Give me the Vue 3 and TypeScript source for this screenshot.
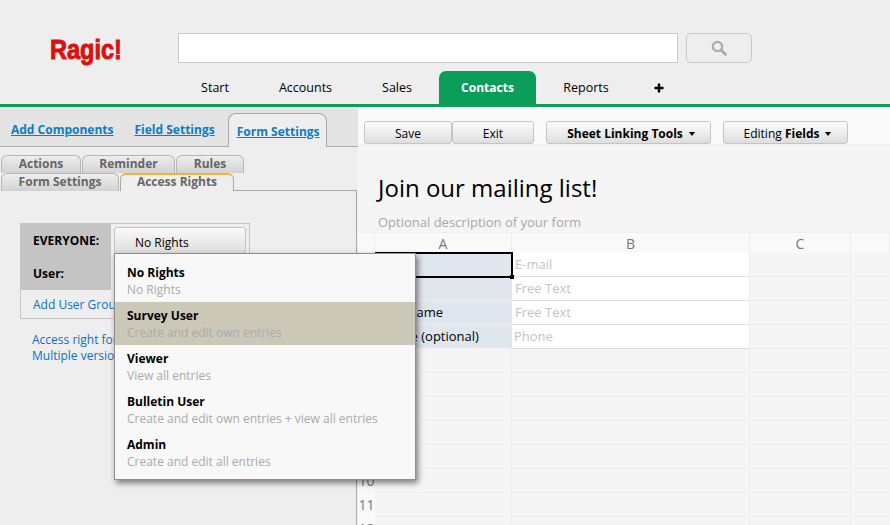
<script setup lang="ts">
const navItems = [
  { label: 'Start', width: 90 },
  { label: 'Accounts', width: 91 },
  { label: 'Sales', width: 92 },
  { label: 'Contacts', width: 97, active: true },
  { label: 'Reports', width: 100 },
]
const rowLabels = ['E-mail', 'Name', 'First name', 'Phone (optional)']
const fieldTypes = ['E-mail', 'Free Text', 'Free Text', 'Phone']
const rows = Array.from({ length: 12 }, (_, i) => i + 1)
const menu = [
  { name: 'No Rights', desc: 'No Rights' },
  { name: 'Survey User', desc: 'Create and edit own entries', active: true },
  { name: 'Viewer', desc: 'View all entries' },
  { name: 'Bulletin User', desc: 'Create and edit own entries + view all entries' },
  { name: 'Admin', desc: 'Create and edit all entries' },
]
</script>

<template>
  <div class="page">
    <header class="header">
      <div class="top">
        <div class="logo"><span class="logo-text">Ragic!</span></div>
        <div class="search"></div>
        <button class="search-btn" aria-label="Search">
          <svg width="16" height="16" viewBox="0 0 16 16">
            <circle cx="6.5" cy="6.5" r="4.7" fill="none" stroke="#aaa" stroke-width="2.2" />
            <path d="M10 10l4.6 4.4" stroke="#aaa" stroke-width="2.8" stroke-linecap="round" />
          </svg>
        </button>
      </div>
      <nav class="nav">
        <div
          v-for="n in navItems"
          :key="n.label"
          class="nav-item"
          :class="{ active: n.active }"
          :style="{ width: n.width + 'px' }"
        >{{ n.label }}</div>
        <div class="nav-plus">
          <svg width="10" height="10" viewBox="0 0 10 10"><path d="M5 .5v9M.5 5h9" stroke="#000" stroke-width="2.4" /></svg>
        </div>
      </nav>
    </header>

    <div class="main">
      <aside class="side">
        <div class="side-tabs">
          <a class="side-tab t1">Add Components</a>
          <a class="side-tab t2">Field Settings</a>
          <a class="side-tab current">Form Settings</a>
        </div>
        <div class="sub-tabs">
          <div class="sub-row">
            <div class="sub w-actions">Actions</div>
            <div class="sub w-reminder">Reminder</div>
            <div class="sub w-rules">Rules</div>
          </div>
          <div class="sub-row">
            <div class="sub w-form">Form Settings</div>
            <div class="sub w-access on">Access Rights</div>
            <div class="sub-fill"></div>
          </div>
        </div>
        <div class="rights">
          <div class="rights-table">
            <div class="rights-top">
              <div class="rights-labels">
                <div class="everyone">EVERYONE:</div>
                <div class="user">User:</div>
              </div>
              <div class="rights-ctrl">
                <div class="rights-btn">No Rights</div>
              </div>
            </div>
            <div class="add-group">Add User Group</div>
          </div>
          <p class="note">Access right for this sheet<br />Multiple versions available</p>
          <div class="popup">
            <div v-for="m in menu" :key="m.name" class="popup-item" :class="{ active: m.active }">
              <div class="popup-name">{{ m.name }}</div>
              <div class="popup-desc">{{ m.desc }}</div>
            </div>
          </div>
        </div>
      </aside>

      <section class="work">
        <div class="toolbar">
          <button class="tbtn save">Save</button>
          <button class="tbtn exit">Exit</button>
          <button class="tbtn link"><b>Sheet Linking Tools</b><i class="caret"></i></button>
          <button class="tbtn edit">Editing <b>Fields</b><i class="caret"></i></button>
        </div>
        <h1 class="title">Join our mailing list!</h1>
        <div class="desc">Optional description of your form</div>
        <div class="sheet">
          <div class="ch corner"></div>
          <div class="ch">A</div>
          <div class="ch">B</div>
          <div class="ch">C</div>
          <div class="ch"></div>
          <template v-for="r in rows" :key="r">
            <div class="rn">{{ r }}</div>
            <div class="cell" :class="{ label: r <= 4 }">{{ rowLabels[r - 1] }}</div>
            <div class="cell" :class="{ field: r <= 4, phone: r === 4 }">{{ fieldTypes[r - 1] }}</div>
            <div class="cell"></div>
            <div class="cell"></div>
          </template>
          <div class="selection"><span class="handle"></span></div>
        </div>
      </section>
    </div>
  </div>
</template>

<style>
html, body { margin: 0; padding: 0; background: #f5f5f5; }
</style>

<style scoped>
.page {
  width: 890px;
  height: 525px;
  overflow: hidden;
  position: relative;
  font-family: "Open Sans", sans-serif;
  font-size: 13px;
  color: #000;
  background: #f5f5f5;
}
.header {
  height: 104px;
  background: #eeeeee;
  border-bottom: 3px solid #0a9e5a;
}
.top {
  display: flex;
  align-items: flex-start;
  height: 71px;
  padding-top: 33px;
  box-sizing: border-box;
}
.logo {
  width: 128px;
  margin-left: 50px;
  font-family: "Liberation Sans", sans-serif;
  font-weight: 700;
  font-size: 28px;
  line-height: 33px;
  color: #dd1010;
}
.logo-text {
  display: inline-block;
  transform: scaleX(0.84);
  transform-origin: left center;
  -webkit-text-stroke: 1px #dd1010;
}
.search {
  width: 500px;
  height: 30px;
  box-sizing: border-box;
  background: #fff;
  border: 1px solid #c8c8c8;
}
.search-btn {
  width: 66px;
  height: 30px;
  margin-left: 8px;
  padding: 0;
  box-sizing: border-box;
  display: flex;
  align-items: center;
  justify-content: center;
  background: #eeeeee;
  border: 1px solid #c8c8c8;
  border-radius: 5px;
}
.nav {
  display: flex;
  height: 33px;
  padding-left: 170px;
}
.nav-item {
  line-height: 33px;
  text-align: center;
  font-size: 12.5px;
}
.nav-item.active {
  background: #0a9e5a;
  color: #fff;
  font-weight: 700;
  font-size: 12px;
  border-radius: 7px 7px 0 0;
  margin-left: -4px;
}
.nav-plus {
  width: 45px;
  display: flex;
  align-items: center;
  justify-content: center;
}
.main {
  display: flex;
  height: 418px;
}
.side {
  width: 358px;
  flex: none;
  display: flex;
  flex-direction: column;
  background: #eeeeee;
}
.side-tabs {
  height: 39px;
  flex: none;
  background: #e4e4e4;
  border-bottom: 1px solid #a9a9a9;
  display: flex;
  align-items: flex-end;
  margin-bottom: 8px;
}
.side-tab {
  color: #0a7cc8;
  font-weight: 700;
  font-size: 12px;
  text-decoration: underline;
  line-height: 32px;
}
.t1 { margin-left: 11px; }
.t2 { margin-left: 21px; }
.current {
  margin-left: 13px;
  margin-bottom: -1px;
  width: 99px;
  height: 34px;
  box-sizing: border-box;
  padding-left: 2px;
  text-align: center;
  line-height: 36px;
  background: #eeeeee;
  border: 1px solid #a9a9a9;
  border-bottom: none;
  border-radius: 8px 8px 0 0;
}
.sub-tabs { padding-left: 1px; padding-right: 1px; flex: none; }
.sub-row {
  display: flex;
  height: 18px;
}
.sub {
  box-sizing: border-box;
  text-align: center;
  font-weight: 700;
  font-size: 12px;
  line-height: 15px;
  color: #666;
  background: linear-gradient(#eeeeee, #d2d2d2);
  border: 1px solid #b5b5b5;
  border-bottom: none;
  border-radius: 6px 6px 0 0;
}
.w-actions { width: 80px; margin-right: 1px; }
.w-reminder { width: 93px; margin-right: 1px; }
.w-rules { width: 68px; }
.w-form { width: 118px; margin-right: 1px; }
.w-access { width: 114px; }
.sub.on {
  background: #eeeeee;
  border-top: 2px solid #f5b336;
  border-left: 1px solid #a9a9a9;
  border-right: 1px solid #a9a9a9;
  line-height: 13px;
}
.sub-fill {
  flex: 1;
  border-bottom: 1px solid #a9a9a9;
}
.rights {
  position: relative;
  flex: 1;
  margin-right: 1px;
  border-right: 1px solid #a9a9a9;
  padding: 32px 0 0 20px;
}
.rights-table {
  width: 230px;
  height: 96px;
  box-sizing: border-box;
  border: 1px solid #c4c4c4;
}
.rights-top {
  display: flex;
  height: 66px;
}
.rights-labels {
  width: 90px;
  background: #c4c4c4;
  font-weight: 700;
  font-size: 12px;
  padding-left: 12px;
  box-sizing: border-box;
}
.everyone { line-height: 17px; padding-top: 8px; }
.user { line-height: 17px; padding-top: 16px; }
.rights-ctrl { padding: 3px 0 0 3px; }
.rights-btn {
  width: 132px;
  height: 27px;
  box-sizing: border-box;
  padding-left: 20px;
  line-height: 30px;
  font-size: 12px;
  background: linear-gradient(#fafafa, #dddddd);
  border: 1px solid #c4c4c4;
  border-radius: 3px;
}
.add-group {
  padding-left: 12px;
  line-height: 29px;
  font-size: 12px;
  color: #0a70c8;
  white-space: nowrap;
}
.note {
  margin: 13px 0 0 12px;
  font-size: 12px;
  line-height: 16px;
  color: #0a70c8;
  white-space: nowrap;
}
.popup {
  position: absolute;
  left: 114px;
  top: 62px;
  width: 302px;
  height: 227px;
  box-sizing: border-box;
  background: #f8f8f8;
  border: 1px solid #8e8e8e;
  box-shadow: 2px 3px 6px rgba(0, 0, 0, 0.5);
  padding-top: 5px;
  z-index: 5;
}
.popup-item {
  height: 43px;
  padding-left: 12px;
  box-sizing: border-box;
  padding-top: 5px;
}
.popup-item.active { background: #cbc8b7; }
.popup-name {
  font-weight: 700;
  font-size: 12px;
  line-height: 17px;
}
.popup-desc {
  font-size: 12px;
  line-height: 17px;
  color: #aaa;
}
.work {
  flex: 1;
  min-width: 0;
  background: #f5f5f5;
}
.toolbar {
  height: 38px;
  background: #fafafa;
  border-bottom: 1px solid #eeeeee;
  box-sizing: border-box;
  display: flex;
  align-items: flex-end;
  padding-left: 6px;
}
.tbtn {
  height: 23px;
  padding: 2px 0 0;
  box-sizing: border-box;
  font-family: inherit;
  font-size: 12px;
  color: #000;
  background: linear-gradient(#fdfdfd, #dedede);
  border: 1px solid #c4c4c4;
  border-radius: 3px;
  text-align: center;
}
.save { width: 88px; }
.exit { width: 82px; margin-right: 12px; }
.link { width: 165px; margin-right: 12px; padding-left: 5px; }
.edit { width: 125px; padding-left: 4px; }
.caret {
  display: inline-block;
  margin-left: 6px;
  vertical-align: 2px;
  border-left: 3.5px solid transparent;
  border-right: 3.5px solid transparent;
  border-top: 4px solid #000;
}
.title {
  margin: 26px 0 0 20px;
  font-size: 24px;
  font-weight: 400;
  line-height: 33px;
}
.desc {
  margin: 9px 0 0 20px;
  font-size: 13px;
  line-height: 18px;
  color: #a8a8a8;
}
.sheet {
  position: relative;
  margin-top: 1px;
  display: grid;
  grid-template-columns: 17px 137px 238px 101px 1fr;
  grid-template-rows: 21px repeat(12, 24px);
}
.ch {
  background: #f9f9f9;
  border-top: 1px solid #eee;
  border-right: 1px solid #eee;
  box-sizing: border-box;
  text-align: center;
  line-height: 21px;
  font-size: 14px;
  color: #777;
}
.rn {
  background: #f9f9f9;
  color: #6f7a80;
  font-size: 14px;
  line-height: 24px;
  text-align: center;
}
.cell {
  box-sizing: border-box;
  border-right: 1px solid #eeeeee;
  border-bottom: 1px solid #eeeeee;
  line-height: 23px;
  padding-left: 4px;
  font-size: 13px;
  white-space: nowrap;
  overflow: hidden;
}
.cell.label {
  background: #e0e6ee;
  border-bottom-color: #eef0f3;
  border-right: none;
}
.cell.field {
  background: #fff;
  color: #c4c4c4;
  border-bottom: 1px solid #dedede;
  padding-left: 3px;
}
.cell.phone { padding-left: 2px; }
.selection {
  position: absolute;
  left: 17px;
  top: 20px;
  width: 138px;
  height: 26px;
  box-sizing: border-box;
  border: 2px solid #000;
  pointer-events: none;
}
.handle {
  position: absolute;
  right: -3px;
  bottom: -3px;
  width: 4px;
  height: 4px;
  background: #000;
}
</style>
